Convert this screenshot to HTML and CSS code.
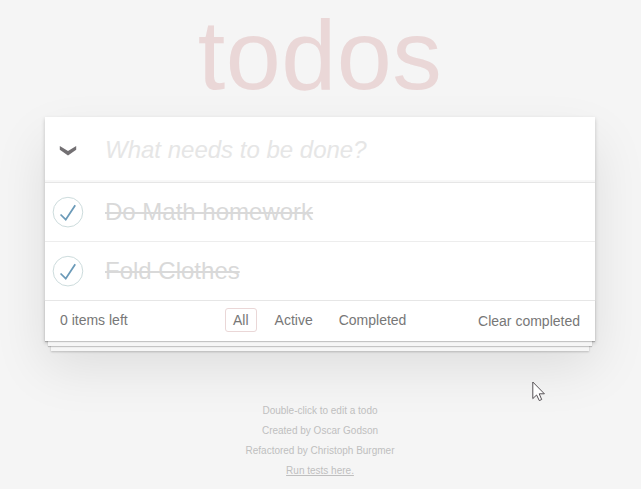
FILE: index.html
```html
<!DOCTYPE html>
<html lang="en">
<head>
<meta charset="utf-8">
<title>todos</title>
<link rel="stylesheet" href="styles.css">
</head>
<body>
<h1 class="title">todos</h1>
<section class="todoapp">
  <header class="header">
    <svg class="toggle-all" width="18" height="12" viewBox="0 0 18 12"><path d="M.8 1 9 6 17.2 1V4.8L9 10.6.8 4.8z"/></svg>
    <input class="new-todo" placeholder="What needs to be done?">
  </header>
  <ul class="todo-list">
    <li class="todo">
      <svg class="toggle" width="40" height="40" viewBox="-10 -18 100 135"><circle cx="50" cy="50" r="50"/><path d="M72 25L42 71 27 56l-4 4 20 20 34-52z"/></svg>
      <label class="label">Do Math homework</label>
    </li>
    <li class="todo">
      <svg class="toggle" width="40" height="40" viewBox="-10 -18 100 135"><circle cx="50" cy="50" r="50"/><path d="M72 25L42 71 27 56l-4 4 20 20 34-52z"/></svg>
      <label class="label">Fold Clothes</label>
    </li>
  </ul>
  <footer class="footer">
    <span class="count">0 items left</span>
    <nav class="filters">
      <a class="filter selected">All</a>
      <a class="filter">Active</a>
      <a class="filter">Completed</a>
    </nav>
    <button class="clear">Clear completed</button>
  </footer>
</section>
<footer class="info">
  <p>Double-click to edit a todo</p>
  <p>Created by Oscar Godson</p>
  <p>Refactored by Christoph Burgmer</p>
  <p><a class="link">Run tests here.</a></p>
</footer>
<svg class="cursor" width="14" height="21" viewBox="0 0 14 21"><path d="M.8 1V17.6L4.6 14 7.3 19.6 9.7 18.5 7.2 12.8H12.4z"/></svg>
</body>
</html>
```
FILE: styles.css
```css
* { box-sizing: border-box; }
body {
  margin: 0;
  height: 489px;
  overflow: hidden;
  padding: 0 46px 0 45px;
  background: #f5f5f5;
  color: #777;
  font: 14px/20px "Liberation Sans", Arial, sans-serif;
}
.title {
  margin: 0;
  height: 117px;
  font-size: 99px;
  font-weight: 400;
  line-height: 109px;
  letter-spacing: .5px;
  text-align: center;
  color: #ead7d7;
}
.todoapp {
  background: #fff;
  box-shadow: 0 2px 4px rgba(0, 0, 0, .2), 0 25px 50px rgba(0, 0, 0, .1);
}
.header {
  display: flex;
  align-items: center;
  height: 65px;
  padding-left: 14px;
  box-shadow: inset 0 -2px 1px rgba(0, 0, 0, .03);
}
.toggle-all { margin-top: 3px; fill: #737073; }
.new-todo {
  width: 460px;
  margin-left: 28px;
  padding: 0;
  border: 0;
  outline: 0;
  background: none;
  font: italic 24px/34px "Liberation Sans", Arial, sans-serif;
}
.new-todo::placeholder { color: #e6e6e6; opacity: 1; }
.todo-list {
  margin: 0;
  padding: 0;
  border-top: 1px solid #e6e6e6;
  list-style: none;
}
.todo {
  display: flex;
  align-items: center;
  height: 59px;
  border-bottom: 1px solid #ededed;
}
.todo:last-child { height: 58px; border: 0; }
.toggle { fill: none; }
.toggle circle { stroke: #c5d6d8; stroke-width: 3; }
.toggle path { fill: #6b9ab8; }
.label {
  margin-left: 20px;
  padding-bottom: 2px;
  font-size: 24px;
  line-height: 29px;
  color: #d9d9d9;
  text-decoration: line-through 2px;
}
.footer {
  position: relative;
  display: flex;
  justify-content: space-between;
  height: 41px;
  padding: 10px 15px;
  border-top: 1px solid #e6e6e6;
  box-shadow: 0 1px 1px rgba(0, 0, 0, .2),
    0 8px 0 -3px #f6f6f6, 0 9px 1px -3px rgba(0, 0, 0, .2),
    0 16px 0 -6px #f6f6f6, 0 17px 2px -6px rgba(0, 0, 0, .2);
}
.count { margin-top: -1px; }
.filters {
  position: absolute;
  top: 7px;
  left: 180px;
  display: flex;
  gap: 10px;
}
.filter {
  height: 24px;
  padding: 1px 7px;
  border: 1px solid transparent;
  border-radius: 3px;
}
.selected { border-color: #ead7d7; }
.clear {
  height: 20px;
  padding: 0;
  border: 0;
  background: none;
  color: inherit;
  font: inherit;
}
.info {
  margin-top: 65px;
  color: #bfbfbf;
  font-size: 10px;
  line-height: 10px;
  text-align: center;
}
.info p { margin: 0 0 10px; }
.link { text-decoration: underline; }
.cursor { position: absolute; left: 532px; top: 381px; fill: #fff; stroke: #555054; stroke-width: 1; }
```
